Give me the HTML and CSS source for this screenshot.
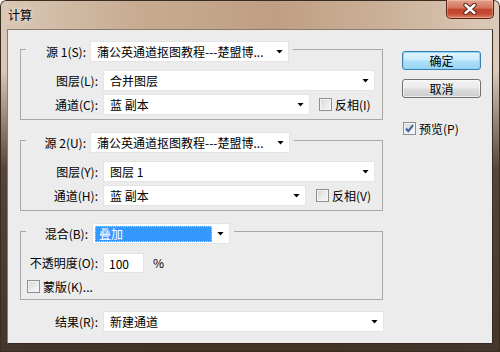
FILE: index.html
```html
<!DOCTYPE html>
<html lang="zh-CN">
<head>
  <meta charset="UTF-8">
  <title>计算</title>
  <link rel="stylesheet" href="styles.css">
</head>
<body>

  <div class="window">
    <div class="titlebar">
      <span class="title">计算</span>
      <button class="close-btn">
        <svg width="14" height="12" viewBox="0 0 14 12">
          <path d="M2.5 2 L11.5 10 M11.5 2 L2.5 10" stroke="#5a2418" stroke-width="4.4" stroke-linecap="round"/>
          <path d="M2.5 2 L11.5 10 M11.5 2 L2.5 10" stroke="#fff" stroke-width="2.4" stroke-linecap="round"/>
        </svg>
      </button>
    </div>

    <div class="client">
      <div class="main">

        <div class="group">
          <div class="group-head">
            <label class="head-label">源 1(S):</label>
            <div class="select src">蒲公英通道抠图教程---楚盟博...<span class="arrow"></span></div>
          </div>
          <div class="row">
            <label class="row-label">图层(L):</label>
            <div class="select layer">合并图层<span class="arrow"></span></div>
          </div>
          <div class="row">
            <label class="row-label">通道(C):</label>
            <div class="select chan-1">蓝 副本<span class="arrow"></span></div>
            <label class="check invert-1"><span class="box"></span>反相(I)</label>
          </div>
        </div>

        <div class="group">
          <div class="group-head">
            <label class="head-label">源 2(U):</label>
            <div class="select src-2">蒲公英通道抠图教程---楚盟博...<span class="arrow"></span></div>
          </div>
          <div class="row">
            <label class="row-label">图层(Y):</label>
            <div class="select layer">图层 1<span class="arrow"></span></div>
          </div>
          <div class="row">
            <label class="row-label">通道(H):</label>
            <div class="select chan-2">蓝 副本<span class="arrow"></span></div>
            <label class="check invert-2"><span class="box"></span>反相(V)</label>
          </div>
        </div>

        <div class="group">
          <div class="group-head">
            <label class="head-label blend-label">混合(B):</label>
            <div class="select blend"><span class="hl">叠加</span><span class="arrow"></span></div>
          </div>
          <div class="row">
            <label class="row-label">不透明度(O):</label>
            <div class="input">100</div>
            <span class="unit">%</span>
          </div>
          <label class="check mask"><span class="box"></span>蒙版(K)...</label>
        </div>

        <div class="row result-row">
          <label class="row-label result-label">结果(R):</label>
          <div class="select result">新建通道<span class="arrow"></span></div>
        </div>

      </div>

      <div class="side">
        <button class="btn default">确定</button>
        <button class="btn">取消</button>
        <label class="check preview">
          <span class="box">
            <svg width="11" height="11" viewBox="0 0 11 11">
              <path d="M2 5.5 L4.3 8.2 L9 2.2" fill="none" stroke="#3b5ea6" stroke-width="2"/>
            </svg>
          </span>预览(P)
        </label>
      </div>
    </div>
  </div>

</body>
</html>
```

FILE: styles.css
```css
body {
  margin: 0;
  font-family: "Noto Sans CJK SC", sans-serif;
  font-size: 12px;
  line-height: 16px;
  color: #000;
  background: #fff;
}

.window {
  width: 500px;
  height: 352px;
  box-sizing: border-box;
  display: flex;
  flex-direction: column;
  border-radius: 6px 6px 0 0;
  box-shadow: inset 0 0 0 1px #3b2c20;
  background:
    linear-gradient(to bottom, rgba(62, 45, 33, 0) 0, rgba(62, 45, 33, 0) 70px, rgba(62, 45, 33, 0.85) 170px, rgba(52, 38, 28, 0.9) 100%),
    linear-gradient(to right, #d9c8b6 0%, #c7ab91 28%, #bf9f84 55%, #cbb199 78%, #dccbba 100%);
}

.titlebar {
  height: 29px;
  flex: none;
  display: flex;
  align-items: flex-start;
}

.title {
  margin: 7px 0 0 8px;
  text-shadow: 0 0 6px rgba(255, 255, 255, 0.7);
}

.close-btn {
  margin-left: auto;
  margin-right: 6px;
  width: 48px;
  height: 19px;
  padding: 0;
  display: flex;
  align-items: center;
  justify-content: center;
  border: 1px solid #5c2218;
  border-top: none;
  border-radius: 0 0 5px 5px;
  background: linear-gradient(to bottom, #e2a08e 0, #d3725a 45%, #c2432b 52%, #c44c33 78%, #dd8668 100%);
  box-shadow: inset 0 0 0 1px rgba(255, 220, 200, 0.35);
}

.client {
  margin-left: 7px;
  width: 486px;
  height: 315px;
  box-sizing: border-box;
  border: 1px solid;
  border-color: #8c7b6c #3a2c22 #3a2c22 #8c7b6c;
  background: #ececec;
  display: flex;
}

.main {
  flex: none;
  width: 364px;
  padding: 19px 0 0 12px;
}

.group {
  width: 363px;
  box-sizing: border-box;
  border: 1px solid #a8a8a8;
  padding-bottom: 4px;
  display: flex;
  flex-direction: column;
}

.group + .group {
  margin-top: 20px;
}

.group-head {
  align-self: flex-start;
  display: flex;
  align-items: center;
  margin: -9px 0 8px 5px;
  padding-right: 4px;
  background: #ececec;
}

.head-label {
  width: 60px;
  margin-right: 4px;
  text-align: right;
  white-space: nowrap;
}

.blend-label {
  width: 62px;
}

.row {
  display: flex;
  align-items: center;
  height: 21px;
}

.row + .row {
  margin-top: 3px;
}

.row-label {
  flex: none;
  width: 77px;
  margin-right: 5px;
  text-align: right;
  white-space: nowrap;
}

.select {
  flex: none;
  height: 21px;
  box-sizing: border-box;
  display: flex;
  align-items: center;
  justify-content: space-between;
  padding: 0 5px 0 6px;
  background: #fff;
  border: 1px solid #e4e4e4;
  white-space: nowrap;
  overflow: hidden;
}

.arrow {
  flex: none;
  width: 7px;
  height: 4px;
  background: #000;
  clip-path: polygon(0 0, 100% 0, 50% 100%);
}

.src { width: 199px; }
.src-2 { width: 200px; }
.layer { width: 272px; }
.chan-1 { width: 207px; }
.chan-2 { width: 203px; }
.result { width: 281px; }

.blend {
  width: 138px;
  padding: 0 5px 0 2px;
}

.hl {
  width: 117px;
  height: 16px;
  box-sizing: border-box;
  padding-left: 3px;
  line-height: 14px;
  color: #fff;
  background: #3399ff;
  border: 1px dotted #e8cf6a;
}

.input {
  width: 41px;
  height: 20px;
  box-sizing: border-box;
  padding-left: 5px;
  line-height: 19px;
  background: #fff;
  border: 1px solid #e4e4e4;
}

.unit {
  margin-left: 9px;
}

.check {
  display: flex;
  align-items: center;
  height: 17px;
  white-space: nowrap;
}

.box {
  flex: none;
  width: 13px;
  height: 13px;
  box-sizing: border-box;
  margin-right: 3px;
  display: flex;
  align-items: center;
  justify-content: center;
  border: 1px solid #8e8f8f;
  background: linear-gradient(135deg, #d6d6d6 0%, #ececec 60%, #f8f8f8 100%);
  box-shadow: inset 0 0 0 1px #f4f4f4;
}

.invert-1 { margin-left: 9px; }
.invert-2 { margin-left: 10px; }

.mask {
  margin: 5px 0 0 6px;
}

.result-row {
  margin-top: 11px;
}

.result-label {
  width: 78px;
}

.side {
  display: flex;
  flex-direction: column;
  align-items: flex-start;
  padding: 21px 0 0 18px;
}

.btn {
  width: 79px;
  height: 19px;
  padding: 0;
  font: inherit;
  color: #000;
  border: 1px solid #707070;
  border-radius: 3px;
  background: linear-gradient(to bottom, #f3f3f3 0, #ebebeb 48%, #dcdcdc 52%, #cfcfcf 100%);
  box-shadow: inset 0 0 0 1px rgba(255, 255, 255, 0.6);
}

.btn + .btn {
  margin-top: 9px;
}

.btn.default {
  border-color: #3c7fb1;
  background: linear-gradient(to bottom, #e3f4fc 0, #c9ebfb 48%, #aee0f8 52%, #98d5f3 100%);
  box-shadow: inset 0 0 0 1px #8ad6f7;
}

.preview {
  margin: 22px 0 0 1px;
}
```
